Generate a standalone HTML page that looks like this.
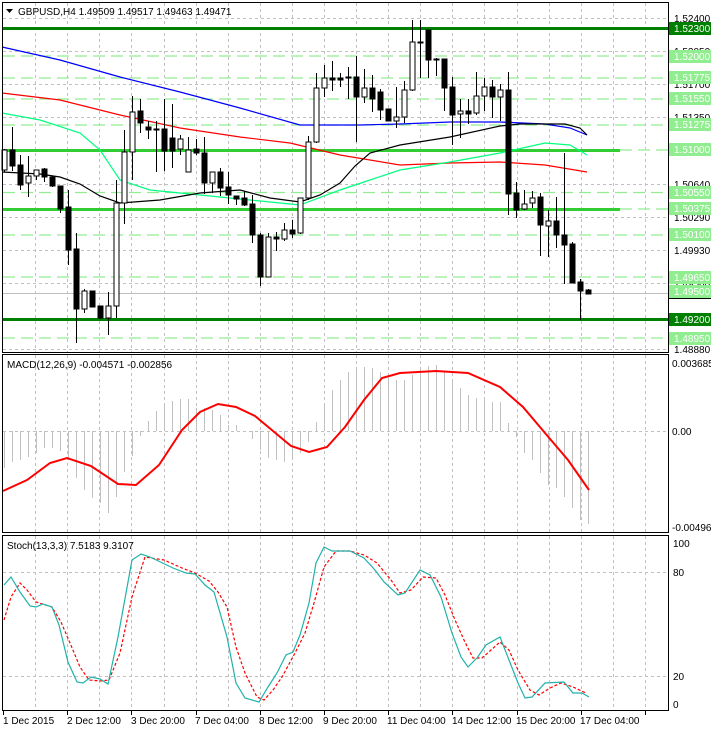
<!DOCTYPE html>
<html><head><meta charset="utf-8"><style>
html,body{margin:0;padding:0;background:#fff;}
svg{display:block;font-family:"Liberation Sans",sans-serif;font-size:10px;}
</style></head><body>
<svg width="711" height="732" viewBox="0 0 711 732" xmlns="http://www.w3.org/2000/svg">
<rect width="711" height="732" fill="#fff"/>
<!-- vertical grid -->
<g stroke="#c0c0c0" stroke-dasharray="3,3" stroke-width="1">
<path d="M35.5 3V352M67.5 3V352M99.5 3V352M131.5 3V352M164.5 3V352M196.5 3V352M228.5 3V352M260.5 3V352M292.5 3V352M324.5 3V352M356.5 3V352M388.5 3V352M420.5 3V352M452.5 3V352M484.5 3V352M517.5 3V352M549.5 3V352M581.5 3V352M613.5 3V352M645.5 3V352"/>
<path d="M35.5 355V532M67.5 355V532M99.5 355V532M131.5 355V532M164.5 355V532M196.5 355V532M228.5 355V532M260.5 355V532M292.5 355V532M324.5 355V532M356.5 355V532M388.5 355V532M420.5 355V532M452.5 355V532M484.5 355V532M517.5 355V532M549.5 355V532M581.5 355V532M613.5 355V532M645.5 355V532"/>
<path d="M35.5 536V710M67.5 536V710M99.5 536V710M131.5 536V710M164.5 536V710M196.5 536V710M228.5 536V710M260.5 536V710M292.5 536V710M324.5 536V710M356.5 536V710M388.5 536V710M420.5 536V710M452.5 536V710M484.5 536V710M517.5 536V710M549.5 536V710M581.5 536V710M613.5 536V710M645.5 536V710"/>
<path d="M3 18.5H669M3 51.5H669M3 84.5H669M3 117.5H669M3 184.5H669M3 217.5H669M3 250.5H669M3 283.5H669M3 349.5H669"/>
<path d="M3 431.5H669M3 572.5H669M3 676.5H669"/>
</g>
<!-- level lines -->
<g stroke="#90ee90" stroke-dasharray="12,6" stroke-width="1.3">
<path d="M3 56H669M3 78H669M3 99H669M3 125H669M620 150H669M3 192.5H669M620 209H669M3 235H669M3 277H669M3 338H669"/>
</g>
<path d="M3 293.5H669" stroke="#c0c0c0" stroke-width="1"/>
<path d="M3 28.5H669M3 319.5H669" stroke="#008000" stroke-width="3"/>
<path d="M3 150.5H620M3 209.5H620" stroke="#32cd32" stroke-width="3"/>
<!-- MAs -->
<g fill="none" stroke-width="1.2">
<polyline stroke="#0000ff" points="2,47 60,60 120,77 180,92 240,108 300,125 360,125 400,124 450,122 500,122 545,124 570,128 587,135"/>
<polyline stroke="#ff0000" points="2,93 60,100 120,115 180,128 240,137 290,143 340,155 400,165 450,163 500,162 545,165 587,172"/>
<polyline stroke="#00ff7f" points="2,113 40,120 80,133 100,150 120,180 150,190 200,195 250,200 300,205 340,190 370,180 400,170 450,162 500,153 545,143 570,145 587,155"/>
<polyline stroke="#000" points="2,172 40,174 60,177 80,184 100,196 120,203 160,200 200,193 240,190 270,198 300,202 320,195 340,183 355,166 370,153 400,145 450,137 500,126 520,124 565,124 580,128 587,135"/>
</g>
<!-- candle wicks -->
<path stroke="#000" stroke-width="1" fill="none" d="M4.5 149V172M12.5 127V171M20.5 155V190M28.5 156V197M36.5 170V180M44.5 168V182M52.5 177V187M60.5 186V213M68.5 190V265M76.5 233V343M84.5 289V313M92.5 291V307M100.5 306V319M108.5 292V335M116.5 180V318M124.5 130V224M132.5 96V180M140.5 99V133M148.5 121V139M156.5 121V172M164.5 99V171M172.5 104V168M180.5 135V155M188.5 137V172M196.5 139V155M204.5 137V194M212.5 172V193M220.5 168V196M228.5 172V204M236.5 196V205M244.5 191V206M252.5 195V243M260.5 233V286M268.5 233V277M276.5 232V251M284.5 223V241M292.5 220V238M300.5 198V234M308.5 136V200M316.5 73V143M324.5 65V97M332.5 61V91M340.5 73V87M348.5 67V99M356.5 56V142M364.5 69V103M372.5 75V112M380.5 89V120M388.5 109V121M396.5 87V128M404.5 81V123M412.5 20V91M420.5 20V78M428.5 30V78M436.5 58V76M444.5 59V111M452.5 77V145M460.5 99V138M468.5 99V124M476.5 72V115M484.5 78V111M492.5 80V118M500.5 84V121M508.5 72V215M516.5 182V218M524.5 190V210M532.5 191V208M540.5 193V256M548.5 210V257M556.5 197V248M564.5 153V284M572.5 242V283M580.5 279V320M588.5 289V294"/>
<!-- bodies -->
<g stroke="#000" stroke-width="1">
<g fill="#fff">
<rect x="2" y="150" width="5" height="20"/><rect x="26" y="176" width="5" height="7"/><rect x="34" y="170" width="5" height="6"/><rect x="82" y="291" width="5" height="18"/><rect x="106" y="306" width="5" height="12"/><rect x="114" y="203" width="5" height="103"/><rect x="122" y="152" width="5" height="51"/><rect x="130" y="112" width="5" height="40"/><rect x="178" y="139" width="5" height="10"/><rect x="186" y="150" width="5" height="22"/><rect x="210" y="172" width="5" height="11"/><rect x="266" y="237" width="5" height="40"/><rect x="282" y="230" width="5" height="9"/><rect x="298" y="198" width="5" height="35"/><rect x="306" y="142" width="5" height="56"/><rect x="314" y="88" width="5" height="54"/><rect x="322" y="78" width="5" height="10"/><rect x="362" y="88" width="5" height="9"/><rect x="394" y="117" width="5" height="4"/><rect x="402" y="90" width="5" height="27"/><rect x="410" y="42" width="5" height="48"/><rect x="458" y="111" width="5" height="3"/><rect x="474" y="96" width="5" height="17"/><rect x="482" y="87" width="5" height="9"/><rect x="498" y="90" width="5" height="7"/><rect x="522" y="204" width="5" height="5"/><rect x="530" y="198" width="5" height="5"/><rect x="546" y="221" width="5" height="5"/>
</g>
<g fill="#000">
<rect x="10" y="150" width="5" height="16"/><rect x="18" y="165" width="5" height="20"/><rect x="42" y="169" width="5" height="8"/><rect x="50" y="177" width="5" height="9"/><rect x="58" y="186" width="5" height="23"/><rect x="66" y="207" width="5" height="43"/><rect x="74" y="249" width="5" height="60"/><rect x="90" y="291" width="5" height="16"/><rect x="98" y="306" width="5" height="12"/><rect x="138" y="111" width="5" height="12"/><rect x="146" y="127" width="5" height="3"/><rect x="154" y="129" width="5" height="1"/><rect x="162" y="129" width="5" height="22"/><rect x="170" y="138" width="5" height="13"/><rect x="194" y="149" width="5" height="4"/><rect x="202" y="153" width="5" height="30"/><rect x="218" y="172" width="5" height="16"/><rect x="226" y="187" width="5" height="8"/><rect x="234" y="196" width="5" height="3"/><rect x="242" y="198" width="5" height="7"/><rect x="250" y="204" width="5" height="31"/><rect x="258" y="235" width="5" height="42"/><rect x="274" y="237" width="5" height="2"/><rect x="290" y="230" width="5" height="4"/><rect x="330" y="78" width="5" height="2"/><rect x="338" y="78" width="5" height="2"/><rect x="346" y="77" width="5" height="1"/><rect x="354" y="77" width="5" height="20"/><rect x="370" y="88" width="5" height="11"/><rect x="378" y="92" width="5" height="18"/><rect x="386" y="109" width="5" height="12"/><rect x="418" y="42" width="5" height="1"/><rect x="426" y="30" width="5" height="30"/><rect x="434" y="59" width="5" height="1"/><rect x="442" y="59" width="5" height="29"/><rect x="450" y="87" width="5" height="28"/><rect x="466" y="111" width="5" height="3"/><rect x="490" y="87" width="5" height="10"/><rect x="506" y="90" width="5" height="104"/><rect x="514" y="193" width="5" height="17"/><rect x="538" y="197" width="5" height="28"/><rect x="554" y="221" width="5" height="14"/><rect x="562" y="235" width="5" height="10"/><rect x="570" y="244" width="5" height="39"/><rect x="578" y="282" width="5" height="9"/><rect x="586" y="290" width="5" height="4"/>
</g></g>
<!-- header -->
<path d="M6 9h7l-3.5 4z" fill="#000"/>
<text x="18" y="15" fill="#000">GBPUSD,H4  1.49509 1.49517 1.49463 1.49471</text>
<!-- right axis main -->
<g fill="#000">
<text x="674" y="22">1.52400</text><text x="674" y="55">1.52050</text><text x="674" y="88">1.51700</text><text x="674" y="121">1.51350</text><text x="674" y="188">1.50640</text><text x="674" y="221">1.50290</text><text x="674" y="254">1.49930</text><text x="674" y="287">1.49580</text><text x="674" y="353">1.48880</text>
</g>
<rect x="669" y="294" width="42" height="5" fill="#000"/>
<g fill="#90ee90">
<rect x="669" y="50" width="42" height="13"/><rect x="669" y="71" width="42" height="13"/><rect x="669" y="92" width="42" height="13"/><rect x="669" y="118" width="42" height="13"/><rect x="669" y="143" width="42" height="13"/><rect x="669" y="186" width="42" height="13"/><rect x="669" y="202" width="42" height="13"/><rect x="669" y="228" width="42" height="13"/><rect x="669" y="271" width="42" height="13"/><rect x="669" y="285" width="42" height="13"/><rect x="669" y="332" width="42" height="13"/>
</g>
<rect x="669" y="22" width="42" height="13" fill="#008000"/><rect x="669" y="313" width="42" height="13" fill="#008000"/>
<g fill="#fff">
<text x="674" y="32">1.52300</text><text x="674" y="60">1.52000</text><text x="674" y="81">1.51775</text><text x="674" y="102">1.51550</text><text x="674" y="128">1.51275</text><text x="674" y="153">1.51000</text><text x="674" y="196">1.50550</text><text x="674" y="212">1.50375</text><text x="674" y="238">1.50100</text><text x="674" y="281">1.49650</text><text x="674" y="295">1.49500</text><text x="674" y="323">1.49200</text><text x="674" y="342">1.48950</text>
</g>
<!-- MACD -->
<path stroke="#c0c0c0" stroke-width="1" d="M4.5 431V468M12.5 431V462M20.5 431V460M28.5 431V457M36.5 431V453M44.5 431V448M52.5 431V448M60.5 431V451M68.5 431V460M76.5 431V478M84.5 431V490M92.5 431V498M100.5 431V503M108.5 431V513M116.5 431V497M124.5 431V472M132.5 431V456M140.5 431V436M148.5 431V421M156.5 431V411M164.5 431V403M172.5 431V401M180.5 431V399M188.5 431V399M196.5 431V408M204.5 431V408M212.5 431V410M220.5 431V415M228.5 431V425M236.5 431V425M244.5 431V432M252.5 431V439M260.5 431V450M268.5 431V458M276.5 431V460M284.5 431V462M292.5 431V457M300.5 431V453M308.5 431V442M316.5 431V422M324.5 431V403M332.5 431V390M340.5 431V380M348.5 431V372M356.5 431V368M364.5 431V367M372.5 431V368M380.5 431V372M388.5 431V377M396.5 431V380M404.5 431V380M412.5 431V375M420.5 431V367M428.5 431V366M436.5 431V365M444.5 431V372M452.5 431V380M460.5 431V388M468.5 431V395M476.5 431V398M484.5 431V398M492.5 431V402M500.5 431V402M508.5 431V423M516.5 431V437M524.5 431V453M532.5 431V460M540.5 431V473M548.5 431V485M556.5 431V488M564.5 431V497M572.5 431V508M580.5 431V520M588.5 431V524"/>
<polyline fill="none" stroke="#ff0000" stroke-width="2" points="3,491 27,480 50,463 67,458 91,466 118,484 136,485 159,465 182,430 200,412 218,404 236,407 255,416 273,431 291,446 309,452 327,447 345,427 364,400 382,378 400,373 436,371 468,373 500,387 523,407 545,433 568,460 589,490"/>
<text x="7" y="368" fill="#000">MACD(12,26,9) -0.004571 -0.002856</text>
<g fill="#000"><text x="672" y="367">0.003685</text><text x="672" y="435">0.00</text><text x="672" y="531">-0.004964</text></g>
<!-- Stoch -->
<polyline fill="none" stroke="#ff0000" stroke-width="1.2" stroke-dasharray="3,2" points="4,620 11,597 20,583 27,590 36,602 52,607 61,622 70,643 80,667 89,680 100,681 109,680 120,653 132,597 145,557 164,560 182,568 195,573 209,581 218,592 227,607 236,647 245,673 257,697 264,700 273,690 282,677 295,653 305,633 314,603 324,567 336,551 350,551 364,555 377,563 391,580 400,593 411,590 423,577 436,578 445,595 455,620 464,640 473,658 482,658 491,650 500,642 509,650 518,670 530,690 539,695 550,688 561,683 573,687 586,693"/>
<polyline fill="none" stroke="#20b2aa" stroke-width="1.2" points="4,585 11,577 20,592 30,606 36,607 43,604 52,607 59,625 68,662 77,682 83,683 91,677 100,679 108,684 118,637 132,560 141,554 150,557 173,568 186,573 195,574 205,585 214,592 227,637 236,683 245,698 259,702 268,687 277,673 286,655 293,652 300,635 309,603 316,563 324,547 332,551 350,551 364,558 375,570 384,582 398,595 405,593 420,570 430,575 441,597 452,633 461,657 468,667 477,658 486,645 500,637 509,660 518,683 525,698 532,697 545,683 564,682 573,693 582,693 589,697"/>
<text x="7" y="549" fill="#000">Stoch(13,3,3) 7.5183 9.3107</text>
<g fill="#000"><text x="673" y="547">100</text><text x="673" y="576">80</text><text x="673" y="680">20</text><text x="673" y="708">0</text></g>
<!-- panel borders -->
<g fill="none" stroke="#000" stroke-width="1">
<rect x="2.5" y="2.5" width="666" height="350"/>
<rect x="2.5" y="354.5" width="666" height="178"/>
<rect x="2.5" y="535.5" width="666" height="175"/>
</g>
<path stroke="#000" d="M3.5 711V715M67.5 711V715M131.5 711V715M196.5 711V715M260.5 711V715M324.5 711V715M388.5 711V715M452.5 711V715M517.5 711V715M581.5 711V715M645.5 711V715"/>
<g fill="#000">
<text x="3" y="724">1 Dec 2015</text><text x="67" y="724">2 Dec 12:00</text><text x="131" y="724">3 Dec 20:00</text><text x="195" y="724">7 Dec 04:00</text><text x="259" y="724">8 Dec 12:00</text><text x="323" y="724">9 Dec 20:00</text><text x="387" y="724">11 Dec 04:00</text><text x="452" y="724">14 Dec 12:00</text><text x="516" y="724">15 Dec 20:00</text><text x="580" y="724">17 Dec 04:00</text>
</g>
</svg>
</body></html>
